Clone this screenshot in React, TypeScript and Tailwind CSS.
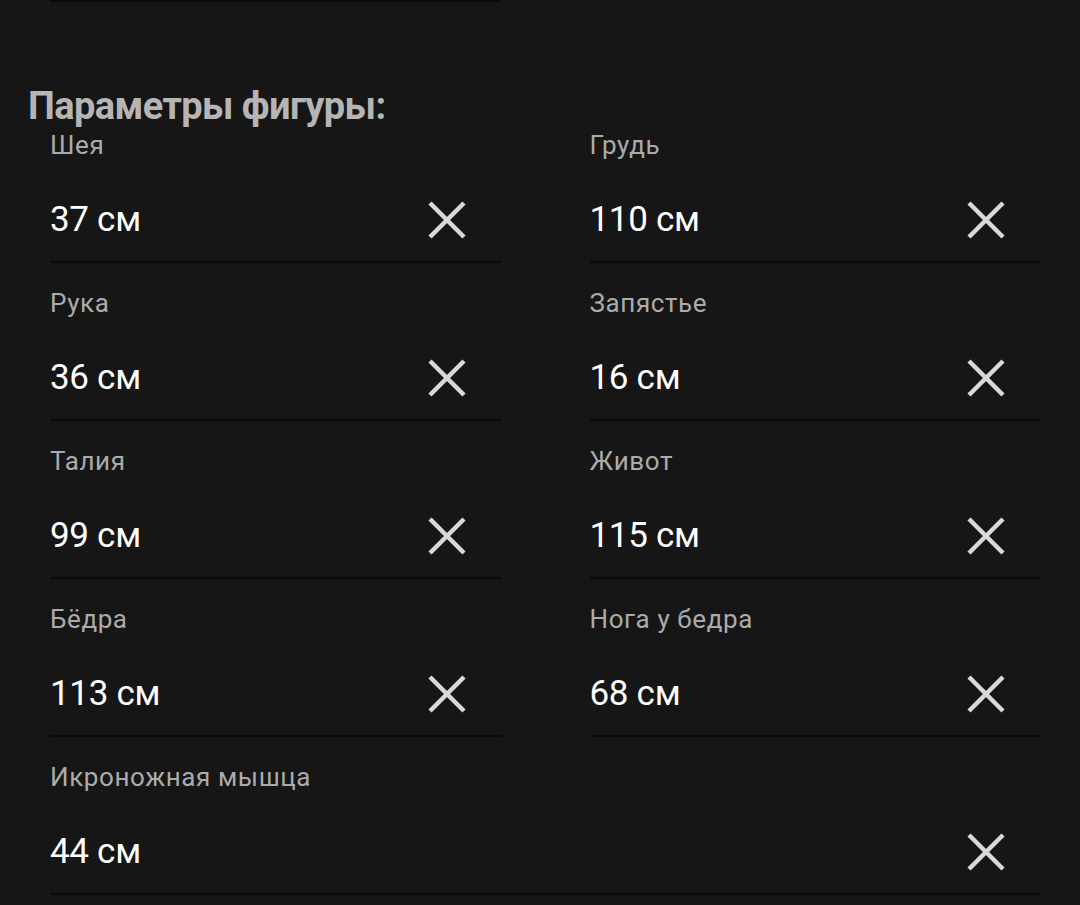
import React from "react";

type Field = { label: string; value: string; wide?: boolean };

const fields: Field[] = [
  { label: "Шея", value: "37 см" },
  { label: "Грудь", value: "110 см" },
  { label: "Рука", value: "36 см" },
  { label: "Запястье", value: "16 см" },
  { label: "Талия", value: "99 см" },
  { label: "Живот", value: "115 см" },
  { label: "Бёдра", value: "113 см" },
  { label: "Нога у бедра", value: "68 см" },
  { label: "Икроножная мышца", value: "44 см", wide: true },
];

function ClearIcon() {
  return (
    <svg width="38" height="38" viewBox="0 0 38 38" className="shrink-0">
      <path d="M2 2 L36 36 M36 2 L2 36" stroke="#d9d9d9" strokeWidth="4.5" fill="none" />
    </svg>
  );
}

function FieldRow({ f }: { f: Field }) {
  return (
    <div className={f.wide ? "col-span-2 flex flex-col" : "flex flex-col"}>
      <div className="text-[26px] leading-[30px] tracking-[0.6px] text-[#ababab]">{f.label}</div>
      <div className="mt-[40px] h-[40px] flex items-center justify-between">
        <span className="text-[35px] leading-[40px] text-white tracking-[-0.3px]">{f.value}</span>
        <span className="mr-[36px] flex items-center">
          <ClearIcon />
        </span>
      </div>
      <div className="mt-[21px] h-[2px] bg-[#0a0a0a]" />
    </div>
  );
}

export default function App() {
  return (
    <div
      className="w-[1080px] h-[905px] overflow-hidden bg-[#161616]"
      style={{ fontFamily: "Roboto, 'Noto Sans', sans-serif" }}
    >
      <div className="ml-[50px] w-[451px] h-[2px] bg-[#0a0a0a]" />
      <h2 className="mt-[82px] pl-[28px] text-[38px] leading-[44px] font-bold tracking-[-0.6px] text-[#b5b5b5]">
        Параметры фигуры:
      </h2>
      <div className="mt-[2px] grid grid-cols-2 gap-x-[88px] gap-y-[25px] pl-[50px] pr-[39px]">
        {fields.map((f) => (
          <FieldRow key={f.label} f={f} />
        ))}
      </div>
    </div>
  );
}
